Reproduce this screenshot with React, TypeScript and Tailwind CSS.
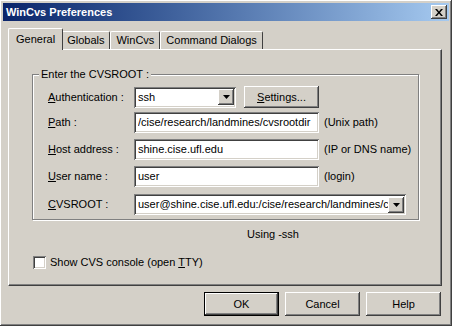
import React from "react";

const raised =
  "shadow-[inset_-1px_-1px_#404040,inset_1px_1px_#ffffff,inset_-2px_-2px_#808080,inset_2px_2px_#d4d0c8]";
const sunken =
  "shadow-[inset_1px_1px_#808080,inset_-1px_-1px_#ffffff,inset_2px_2px_#404040,inset_-2px_-2px_#d4d0c8]";

function Arrow() {
  return (
    <div className={`w-[16px] h-[16px] shrink-0 bg-[#d4d0c8] ${raised} flex items-center justify-center`}>
      <svg width="7" height="4" viewBox="0 0 7 4">
        <path d="M0 0h7L3.5 4z" fill="#000" />
      </svg>
    </div>
  );
}

function Field({ w, value, combo }: { w: string; value: string; combo?: boolean }) {
  return (
    <div className={`${w} h-[21px] shrink-0 bg-white ${sunken} flex items-center pl-[4px] pr-[2px] overflow-hidden`}>
      <span className="flex-1 whitespace-nowrap overflow-hidden">{value}</span>
      {combo && <Arrow />}
    </div>
  );
}

function Tab({ label, active }: { label: string; active?: boolean }) {
  return (
    <div
      className={`relative flex items-center border-l border-t border-white rounded-tl-[2px] rounded-tr-[2px] border-r border-r-[#404040] bg-[#d4d0c8] ${
        active ? "h-[22px] -mx-[2px] px-[7px] z-10 -mb-[1px]" : "h-[18px] px-[5px]"
      }`}
    >
      {label}
    </div>
  );
}

function Row({ label, u, children, hint, mt }: { label: string; u: number; children: React.ReactNode; hint?: string; mt: string }) {
  return (
    <div className={`flex items-center ${mt}`}>
      <div className="w-[101px] shrink-0 pl-[15px] whitespace-nowrap">
        {label.slice(0, u)}
        <span className="underline">{label[u]}</span>
        {label.slice(u + 1)}
      </div>
      {children}
      {hint && <span className="ml-[5px] whitespace-nowrap">{hint}</span>}
    </div>
  );
}

export default function App() {
  return (
    <div
      className={`w-[452px] h-[326px] bg-[#d4d0c8] text-black text-[11px] leading-none ${raised} p-[3px] flex flex-col`}
      style={{ fontFamily: '"Liberation Sans", Arial, sans-serif' }}
    >
      {/* title bar */}
      <div className="h-[18px] bg-gradient-to-r from-[#0a246a] to-[#a6caf0] flex items-center pl-[3px] pr-[2px]">
        <span className="text-white font-bold text-[11px] flex-1">WinCvs Preferences</span>
        <div className={`w-[16px] h-[14px] bg-[#d4d0c8] ${raised} flex items-center justify-center`}>
          <svg width="8" height="7" viewBox="0 0 8 7">
            <path d="M0 0h2l2 2.5L6 0h2L5 3.5 8 7H6L4 4.5 2 7H0l3-3.5z" fill="#000" />
          </svg>
        </div>
      </div>

      <div className="px-[5px] pt-[7px] flex flex-col flex-1">
        {/* tabs */}
        <div className="flex items-end pl-[2px] h-[21px]">
          <Tab label="General" active />
          <Tab label="Globals" />
          <Tab label="WinCvs" />
          <Tab label="Command Dialogs" />
        </div>

        {/* panel */}
        <div className="w-[434px] h-[237px] border-l border-t border-white border-r border-b border-r-[#404040] border-b-[#404040] shadow-[inset_-1px_-1px_#808080] pt-[24px] px-[23px]">
          <fieldset className="relative w-[387px] h-[146px] border border-[#808080] shadow-[1px_1px_#ffffff,inset_1px_1px_#ffffff] pt-[11px]">
            <span className="absolute -top-[6px] left-[6px] px-[2px] bg-[#d4d0c8]">Enter the CVSROOT :</span>
            <Row label="Authentication :" u={0} mt="mt-0">
              <Field w="w-[102px]" value="ssh" combo />
              <div className={`ml-[8px] w-[75px] h-[22px] shrink-0 ${raised} flex items-center justify-center`}>
                <span className="underline">S</span>ettings...
              </div>
            </Row>
            <Row label="Path :" u={0} mt="mt-[4px]" hint="(Unix path)">
              <Field w="w-[185px]" value="/cise/research/landmines/cvsrootdir" />
            </Row>
            <Row label="Host address :" u={0} mt="mt-[6px]" hint="(IP or DNS name)">
              <Field w="w-[185px]" value="shine.cise.ufl.edu" />
            </Row>
            <Row label="User name :" u={0} mt="mt-[6px]" hint="(login)">
              <Field w="w-[185px]" value="user" />
            </Row>
            <Row label="CVSROOT :" u={0} mt="mt-[7px]">
              <Field w="w-[272px]" value="user@shine.cise.ufl.edu:/cise/research/landmines/cvsrootdir" combo />
            </Row>
          </fieldset>
          <div className="pl-[215px] mt-[9px]">Using -ssh</div>
          <div className="flex items-center mt-[16px] pl-[1px]">
            <div className={`w-[13px] h-[13px] bg-white ${sunken}`} />
            <span className="ml-[4px]">
              Show CVS console (open <span className="underline">T</span>TY)
            </span>
          </div>
        </div>

        {/* buttons */}
        <div className="flex justify-end gap-[6px] mt-[6px] pr-[3px]">
          <div className={`w-[75px] h-[24px] border border-black ${raised} flex items-center justify-center`}>OK</div>
          <div className={`w-[75px] h-[24px] ${raised} flex items-center justify-center`}>Cancel</div>
          <div className={`w-[75px] h-[24px] ${raised} flex items-center justify-center`}>Help</div>
        </div>
      </div>
    </div>
  );
}
